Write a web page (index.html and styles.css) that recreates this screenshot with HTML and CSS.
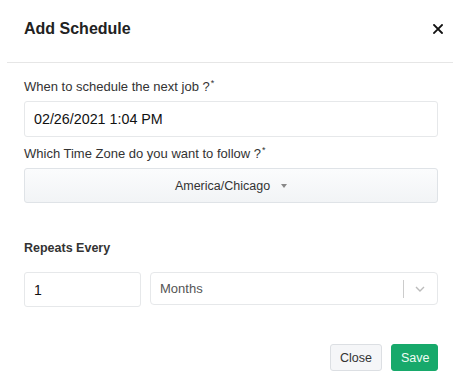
FILE: index.html
```html
<!DOCTYPE html>
<html lang="en">
<head>
    <meta charset="UTF-8">
    <title>Add Schedule</title>
    <meta name="viewport" content="width=device-width, initial-scale=1.0">
    <link rel="stylesheet" href="styles.css">
</head>
<body>
    <div class="modal">
        <div class="modal-header">
            <h2 class="modal-title">Add Schedule</h2>
            <button class="close-x" aria-label="Close">
                <svg width="10" height="10" viewBox="0 0 10 10"><path d="M1 1 L9 9 M9 1 L1 9" stroke="#111" stroke-width="1.8" stroke-linecap="square"/></svg>
            </button>
        </div>
        <div class="modal-body">
            <label class="field-label">When to schedule the next job ?<sup>*</sup></label>
            <div class="text-box date-box">02/26/2021 1:04 PM</div>

            <label class="field-label second">Which Time Zone do you want to follow ?<sup>*</sup></label>
            <div class="tz-select">
                America/Chicago
                <span class="caret"></span>
            </div>

            <div class="section-title">Repeats Every</div>
            <div class="repeat-row">
                <div class="text-box count-box">1</div>
                <div class="unit-select">
                    <span class="unit-value">Months</span>
                    <span class="unit-sep"></span>
                    <svg class="chevron" width="10" height="6" viewBox="0 0 10 6"><path d="M1 1 L5 5 L9 1" fill="none" stroke="#bbb" stroke-width="1.4"/></svg>
                </div>
            </div>
        </div>
        <div class="modal-footer">
            <button class="btn btn-close">Close</button>
            <button class="btn btn-save">Save</button>
        </div>
    </div>
</body>
</html>
```

FILE: styles.css
```css
body {
    background: #fff;
    color: #333;
    font-family: 'Liberation Sans', Arial, Helvetica, sans-serif;
    margin: 0;
    padding: 0;
}
.modal {
    margin-left: 7px;
    background: #fff;
}
.modal-header {
    height: 63px;
    display: flex;
    align-items: center;
    justify-content: space-between;
    padding: 0 10px 0 17px;
    border-bottom: 1px solid #e6e6e6;
    box-sizing: border-box;
}
.modal-title {
    margin: 0 0 4px 0;
    font-size: 16px;
    font-weight: bold;
    color: #222;
}
.close-x {
    background: none;
    border: none;
    padding: 0;
    margin: 0 0 4px 0;
    width: 10px;
    height: 10px;
    display: flex;
}
.modal-body {
    padding: 16px 15px 0 17px;
}
.field-label {
    display: block;
    font-size: 13px;
    line-height: 16px;
    color: #333;
    margin-bottom: 6px;
}
.field-label sup {
    font-size: 9px;
    vertical-align: 5px;
    line-height: 0;
    margin-left: 1px;
}
.field-label.second {
    margin-top: 9px;
}
.text-box {
    border: 1px solid #e6e8ea;
    border-radius: 3px;
    box-sizing: border-box;
    color: #111;
    display: flex;
    align-items: center;
}
.date-box {
    height: 36px;
    padding-left: 9px;
    font-size: 14.3px;
}
.tz-select {
    height: 35px;
    box-sizing: border-box;
    border: 1px solid #dfe3e7;
    border-radius: 3px;
    background: linear-gradient(#fbfcfd, #f2f4f6);
    display: flex;
    align-items: center;
    justify-content: center;
    font-size: 12.5px;
    color: #333;
}
.caret {
    width: 0;
    height: 0;
    border-left: 3.5px solid transparent;
    border-right: 3.5px solid transparent;
    border-top: 4px solid #888;
    margin-left: 11px;
}
.section-title {
    margin-top: 37px;
    font-size: 12.5px;
    font-weight: bold;
    line-height: 16px;
    color: #333;
}
.repeat-row {
    display: flex;
    gap: 9px;
    margin-top: 16px;
    align-items: flex-start;
}
.count-box {
    width: 117px;
    height: 35px;
    padding-left: 9px;
    font-size: 14px;
}
.unit-select {
    flex: 1;
    height: 33px;
    box-sizing: border-box;
    border: 1px solid #e6e8ea;
    border-radius: 4px;
    display: flex;
    align-items: center;
    padding: 0 12px 0 9px;
}
.unit-value {
    flex: 1;
    font-size: 13px;
    color: #555;
}
.unit-sep {
    width: 1px;
    height: 18px;
    background: #ccc;
    margin-right: 11px;
}
.modal-footer {
    display: flex;
    justify-content: flex-end;
    gap: 9px;
    padding: 37px 15px 0 0;
}
.btn {
    height: 27px;
    border-radius: 3px;
    font-family: inherit;
    font-size: 12.5px;
    padding: 0 9px;
    cursor: pointer;
}
.btn-close {
    background: #f5f6f8;
    border: 1px solid #dcdfe3;
    color: #333;
    width: 52px;
}
.btn-save {
    background: #17a96b;
    border: 1px solid #17a96b;
    color: #eefcf4;
    width: 47px;
}
```
